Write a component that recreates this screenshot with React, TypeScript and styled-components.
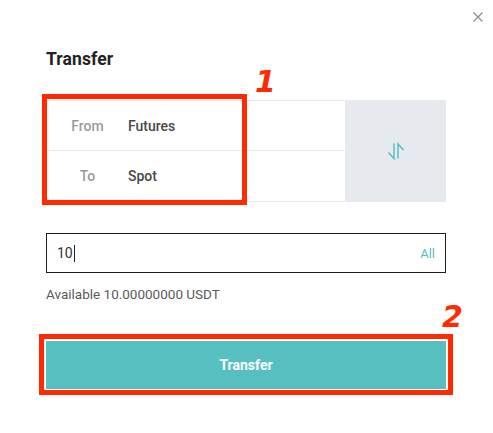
import React from "react";
import styled, { createGlobalStyle } from "styled-components";

const Global = createGlobalStyle`
  html, body { margin: 0; padding: 0; background: #fff; }
  body { font-family: Roboto, "Noto Sans", Arial, sans-serif; }
  * { box-sizing: border-box; }
`;

const RED = "#ff2a00";
const TEAL = "#58bfc0";

const Page = styled.div`
  position: relative;
  width: 493px;
  height: 433px;
  padding: 47px 47px 0 46px;
  display: flex;
  flex-direction: column;
`;

const Close = styled.button`
  position: absolute;
  top: 11px;
  right: 9px;
  width: 12px;
  height: 12px;
  padding: 0;
  border: 0;
  background: transparent;
  display: flex;
  svg { display: block; }
`;

const Title = styled.h2`
  margin: 0;
  font-size: 17.5px;
  line-height: 24px;
  font-weight: 700;
  color: #222;
  letter-spacing: 0.1px;
`;

const Selector = styled.div`
  position: relative;
  margin-top: 29px;
  display: grid;
  grid-template-columns: 299px 101px;
  height: 102px;
`;

const Rows = styled.div`
  display: grid;
  grid-template-rows: 1fr 1fr;
  border: 1px solid #e8e8ea;
  border-right: 0;
`;

const Row = styled.div<{ $last?: boolean }>`
  display: flex;
  align-items: center;
  border-bottom: ${(p) => (p.$last ? "0" : "1px solid #e8e8ea")};
  font-size: 14px;
`;

const Label = styled.span`
  width: 81px;
  text-align: center;
  color: #9a9a9a;
  font-weight: 500;
`;

const Value = styled.span`
  color: #484848;
  font-weight: 500;
`;

const Swap = styled.button`
  border: 0;
  padding: 0;
  background: #e6e9ee;
  display: flex;
  align-items: center;
  justify-content: center;
  cursor: pointer;
`;

const Mark = styled.div<{ $l: number; $t: number; $w: number; $h: number }>`
  position: absolute;
  left: ${(p) => p.$l}px;
  top: ${(p) => p.$t}px;
  width: ${(p) => p.$w}px;
  height: ${(p) => p.$h}px;
  border: 5px solid ${RED};
  pointer-events: none;
`;

const Num = styled.span<{ $l: number; $t: number }>`
  position: absolute;
  left: ${(p) => p.$l}px;
  top: ${(p) => p.$t}px;
  color: ${RED};
  font-family: "DejaVu Sans", sans-serif;
  font-style: italic;
  font-weight: 700;
  font-size: 30px;
  line-height: 30px;
`;

const InputBox = styled.div`
  margin-top: 31px;
  height: 40px;
  border: 1px solid #1e1e1e;
  display: flex;
  align-items: center;
  padding: 0 10px 0 10px;
`;

const Amount = styled.span`
  flex: 1;
  font-size: 14px;
  color: #333;
  display: flex;
  align-items: center;
`;

const Caret = styled.span`
  display: inline-block;
  width: 1px;
  height: 17px;
  background: #222;
  margin-left: 1px;
`;

const All = styled.span`
  font-size: 13px;
  color: ${TEAL};
`;

const Available = styled.div`
  margin-top: 12px;
  font-size: 13.5px;
  line-height: 18px;
  color: #5a5a5a;
`;

const ButtonWrap = styled.div`
  position: relative;
  margin-top: 38px;
`;

const Primary = styled.button`
  width: 100%;
  height: 48px;
  border: 0;
  background: ${TEAL};
  color: #fff;
  font-family: inherit;
  font-size: 14px;
  font-weight: 700;
  cursor: pointer;
`;

export default function App() {
  return (
    <>
      <Global />
      <Page>
        <Close aria-label="close">
          <svg width="12" height="12" viewBox="0 0 12 12">
            <path d="M1.5 1.5 L10.5 10.5 M10.5 1.5 L1.5 10.5" stroke="#8a8a8a" strokeWidth="1.1" fill="none" />
          </svg>
        </Close>
        <Title>Transfer</Title>
        <Selector>
          <Rows>
            <Row>
              <Label>From</Label>
              <Value>Futures</Value>
            </Row>
            <Row $last>
              <Label>To</Label>
              <Value>Spot</Value>
            </Row>
          </Rows>
          <Swap aria-label="swap">
            <svg width="18" height="18" viewBox="0 0 18 18">
              <path d="M7 1.5 V16.5 L1.5 10.5 M11 16.5 V2 L16.5 8" stroke={TEAL} strokeWidth="1.5" fill="none" />
            </svg>
          </Swap>
          <Mark $l={-4} $t={-6} $w={205} $h={111} />
          <Num $l={209} $t={-33}>1</Num>
        </Selector>
        <InputBox>
          <Amount>
            10<Caret />
          </Amount>
          <All>All</All>
        </InputBox>
        <Available>Available 10.00000000 USDT</Available>
        <ButtonWrap>
          <Primary>Transfer</Primary>
          <Mark $l={-7} $t={-7} $w={414} $h={61} />
          <Num $l={396} $t={-39}>2</Num>
        </ButtonWrap>
      </Page>
    </>
  );
}
